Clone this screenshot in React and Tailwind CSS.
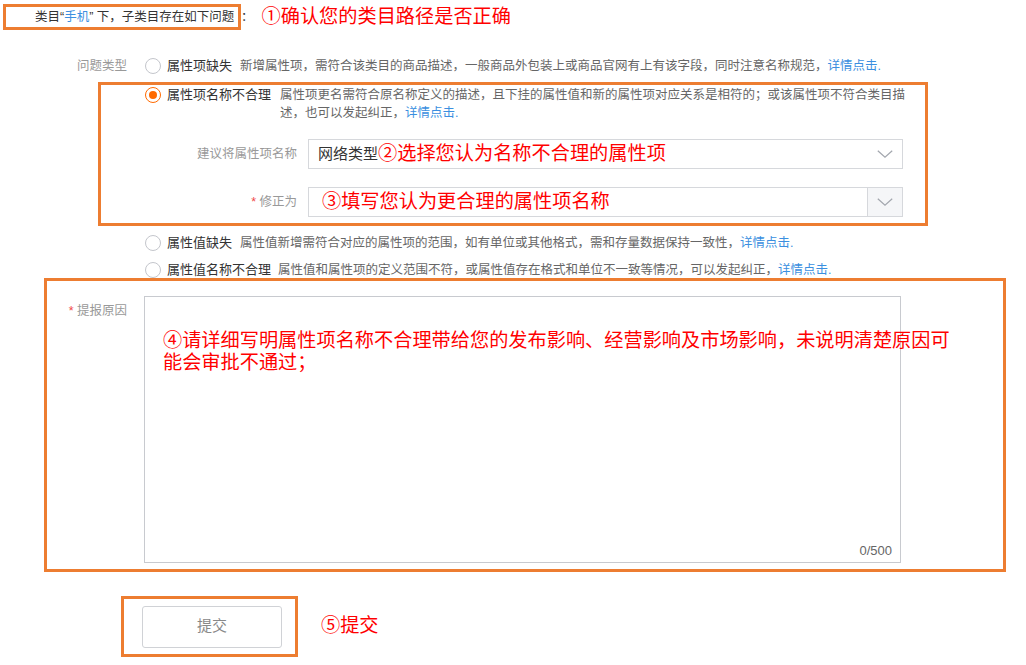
import React from "react";

const ORANGE = "border-[#ed7d31]";

function Radio({ checked }) {
  if (checked) {
    return (
      <span className="mt-px flex h-4 w-4 shrink-0 items-center justify-center rounded-full border-[1.5px] border-[#ff6a00] bg-white">
        <span className="h-2 w-2 rounded-full bg-[#ff6a00]" />
      </span>
    );
  }
  return <span className="mt-px block h-4 w-4 shrink-0 rounded-full border border-[#c4c6cc] bg-white" />;
}

function Chevron() {
  return (
    <svg width="16" height="8" viewBox="0 0 16 8" className="shrink-0">
      <polyline points="0.8,0.8 8,7.2 15.2,0.8" fill="none" stroke="#a3a7ae" strokeWidth="1.2" />
    </svg>
  );
}

function Link() {
  return <span className="text-[#3b8fe0]">详情点击.</span>;
}

function Option({ title, gap, children }) {
  return (
    <div className="flex h-[18px] items-start pl-[145px] leading-[18px]">
      <Radio />
      <span className="ml-[6px] whitespace-nowrap text-[13px] text-[#333]">{title}</span>
      <span className={`${gap} whitespace-nowrap text-[12.5px] text-[#666]`}>
        {children}
        <Link />
      </span>
    </div>
  );
}

export default function App() {
  return (
    <div className="h-[665px] w-[1026px] overflow-hidden bg-white font-['Liberation_Sans','Noto_Sans_CJK_SC',sans-serif]">
      {/* header */}
      <div className="ml-[3px] mt-[4px] flex items-center">
        <div className={`flex h-[26px] w-[238px] items-center border-[3px] ${ORANGE} pl-[29px]`}>
          <span className="whitespace-nowrap text-[12.5px] text-[#333]">
            类目“<span className="text-[#3b8fe0]">手机</span>” 下，子类目存在如下问题
          </span>
        </div>
        <span className="text-[12.5px] text-[#333]">：</span>
        <span className="ml-[8px] whitespace-nowrap text-[19.2px] leading-[22px] text-[#ff0000]">①确认您的类目路径是否正确</span>
      </div>

      {/* 问题类型 */}
      <div className="mt-[27px] flex h-[18px] items-start leading-[18px]">
        <span className="w-[127px] text-right text-[12.5px] text-[#999]">问题类型</span>
        <span className="ml-[18px] flex">
          <Radio />
        </span>
        <span className="ml-[6px] whitespace-nowrap text-[13px] text-[#333]">属性项缺失</span>
        <span className="ml-[8px] whitespace-nowrap text-[12.5px] text-[#666]">
          新增属性项，需符合该类目的商品描述，一般商品外包装上或商品官网有上有该字段，同时注意名称规范，
          <Link />
        </span>
      </div>

      {/* selected option */}
      <div className={`ml-[98px] mt-[7px] w-[830px] border-[3px] ${ORANGE} pb-[6px] pt-px`}>
        <div className="flex items-start pl-[44px] leading-[18px]">
          <Radio checked />
          <span className="ml-[6px] whitespace-nowrap text-[13px] text-[#333]">属性项名称不合理</span>
          <span className="ml-[9px] w-[630px] text-[12.5px] text-[#666]">
            属性项更名需符合原名称定义的描述，且下挂的属性值和新的属性项对应关系是相符的；或该属性项不符合类目描述，也可以发起纠正，
            <Link />
          </span>
        </div>

        <div className="mt-[17px] flex items-center">
          <span className="w-[196px] text-right text-[12.5px] text-[#999]">建议将属性项名称</span>
          <div className="ml-[11px] flex h-[30px] w-[595px] items-center border border-[#d6d8dc] pl-[9px] pr-[9px]">
            <span className="whitespace-nowrap text-[15px] text-[#333]">网络类型</span>
            <span className="whitespace-nowrap text-[19.2px] text-[#ff0000]">②选择您认为名称不合理的属性项</span>
            <span className="ml-auto flex">
              <Chevron />
            </span>
          </div>
        </div>

        <div className="mt-[18px] flex items-center">
          <span className="w-[196px] text-right text-[12.5px] text-[#999]">
            <span className="text-[#f04848]">*</span> 修正为
          </span>
          <div className="ml-[11px] flex h-[30px] w-[595px] border border-[#d6d8dc]">
            <div className="flex flex-1 items-center pl-[13px]">
              <span className="whitespace-nowrap text-[19.2px] text-[#ff0000]">③填写您认为更合理的属性项名称</span>
            </div>
            <div className="flex w-[35px] items-center justify-center border-l border-[#d6d8dc] bg-[#f5f6f8]">
              <Chevron />
            </div>
          </div>
        </div>
      </div>

      <div className="mt-[8px]">
        <Option title="属性值缺失" gap="ml-[8px]">
          属性值新增需符合对应的属性项的范围，如有单位或其他格式，需和存量数据保持一致性，
        </Option>
      </div>
      <div className="mt-[9px]">
        <Option title="属性值名称不合理" gap="ml-[7px]">
          属性值和属性项的定义范围不符，或属性值存在格式和单位不一致等情况，可以发起纠正，
        </Option>
      </div>

      {/* reason */}
      <div className={`ml-[44px] mt-[-1px] flex h-[294px] w-[962px] items-start border-[3px] ${ORANGE} pt-[15px]`}>
        <span className="mt-[6px] w-[80px] text-right text-[12.5px] leading-[18px] text-[#999]">
          <span className="text-[#f04848]">*</span> 提报原因
        </span>
        <div className="ml-[17px] flex h-[267px] w-[757px] flex-col border border-[#c8cacf]">
          <div className="whitespace-nowrap pl-[18px] pt-[33px] text-[19.2px] leading-[22px] text-[#ff0000]">
            ④请详细写明属性项名称不合理带给您的发布影响、经营影响及市场影响，未说明清楚原因可
            <br />
            能会审批不通过；
          </div>
          <div className="mt-auto self-end pb-[2px] pr-[8px] text-[13px] leading-[18px] text-[#666]">0/500</div>
        </div>
      </div>

      {/* submit */}
      <div className="ml-[121px] mt-[24px] flex items-center">
        <div className={`flex h-[61px] w-[177px] items-center border-[3px] ${ORANGE} pl-[18px]`}>
          <button className="h-[42px] w-[140px] rounded-[3px] border border-[#d0d2d6] bg-white text-[15px] text-[#888]">
            提交
          </button>
        </div>
        <span className="ml-[23px] whitespace-nowrap text-[19.2px] text-[#ff0000]">⑤提交</span>
      </div>
    </div>
  );
}
